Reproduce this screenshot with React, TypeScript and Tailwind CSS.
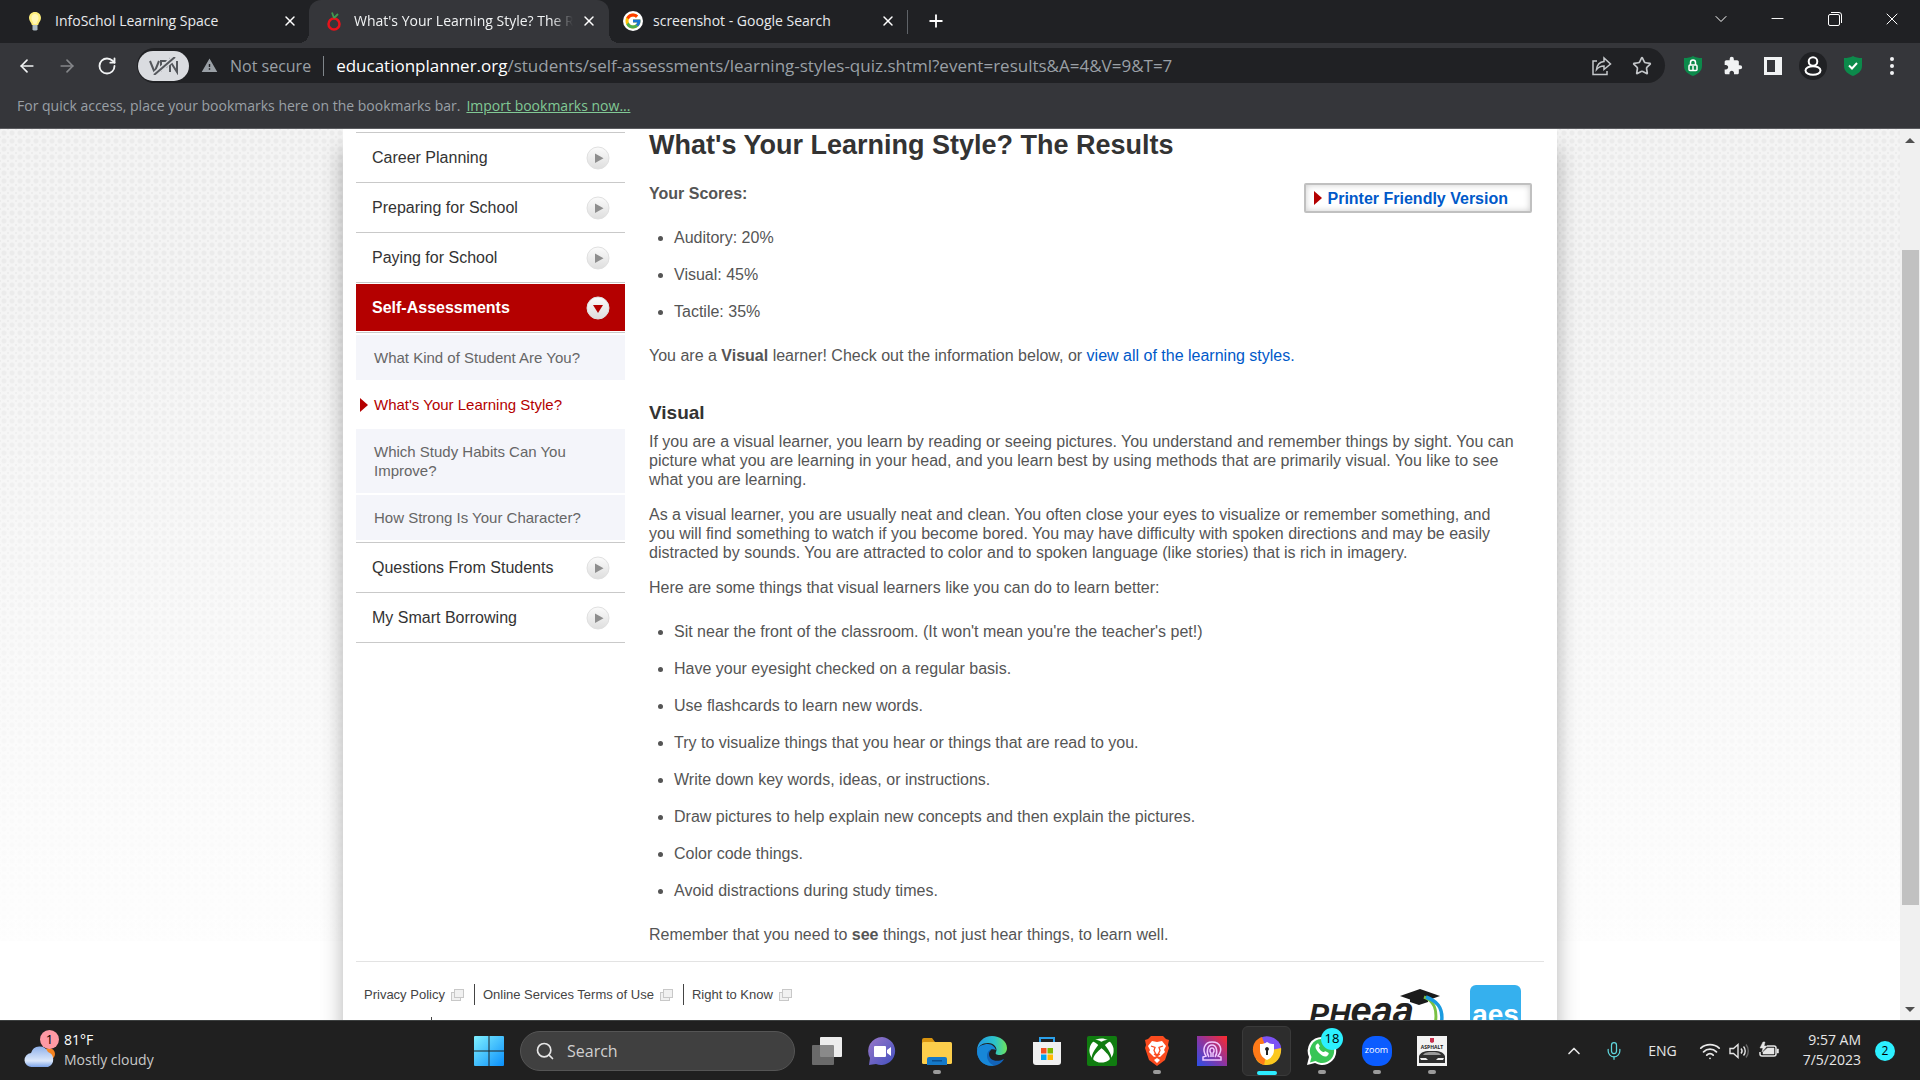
import React from "react";
import { ArrowLeft, ArrowRight, ChevronDown, ChevronUp, Mic, Minus, Plus, RotateCw, Search, Star, Wifi, X } from "lucide-react";
import { FaXbox } from "react-icons/fa";
import { FcGoogle } from "react-icons/fc";
import { MdExtension, MdWarning } from "react-icons/md";

const link = "text-[#0059c9] hover:underline";

/* ---------- Browser chrome ---------- */

function Bulb() {
  return (
    <svg viewBox="0 0 16 20" className="h-5 w-4">
      <path d="M8 1c-3.600 0-6 2.600-6 6 0 3 2.500 4.500 2.800 7h6.400c.3-2.500 2.800-4 2.800-7 0-3.400-2.400-6-6-6Z" fill="#fdee7c" />
      <path d="M8 3c-2 0-3.500 1.500-3.500 4 0 2 1.700 4 2 6h3c.3-2 2-4 2-6C11.500 4.500 10 3 8 3Z" fill="#fff7b8" />
      <path d="M5.500 14h5v4.500l-1 1h-3l-1-1Z" fill="#a9b9c2" />
    </svg>
  );
}

function Apple() {
  return (
    <svg viewBox="0 0 16 20" className="h-5 w-4" fill="none">
      <ellipse cx="8" cy="13" rx="5.500" ry="5.500" stroke="#e8131b" strokeWidth="2.500" />
      <path d="M8 7 6 1.500M8 7l4-4" stroke="#3f9b4f" strokeWidth="1.800" />
    </svg>
  );
}

function Tab({ icon, title, active = false }: { icon: React.ReactNode; title: string; active?: boolean }) {
  return (
    <div
      className={
        active
          ? "relative flex h-full w-[300px] items-center rounded-t-xl bg-[#35363a] pr-3 pb-0.5 pl-[15px]"
          : "flex h-full w-[298px] items-center pr-[11px] pb-0.5 pl-3.5"
      }
    >
      {active && (
        <>
          <span className="absolute bottom-0 -left-2.5 size-2.5 bg-[radial-gradient(circle_at_0_0,#202124_10px,#35363a_10px)]" />
          <span className="absolute -right-2.5 bottom-0 size-2.5 bg-[radial-gradient(circle_at_100%_0,#202124_10px,#35363a_10px)]" />
        </>
      )}
      <span className="flex w-5 justify-center">{icon}</span>
      <button
        className={
          active
            ? "ml-2.5 flex-1 overflow-hidden mask-r-from-90% text-left text-sm whitespace-nowrap text-[#f1f3f4]"
            : "ml-2.5 flex-1 overflow-hidden text-left text-sm whitespace-nowrap text-[#e8eaed]"
        }
      >
        {title}
      </button>
      <button aria-label="Close tab" className="ml-2 text-white">
        <X size={16} strokeWidth={2.2} />
      </button>
    </div>
  );
}

function TabStrip() {
  return (
    <div className="flex h-[43px] items-center bg-[#202124]">
      <div className="flex h-full pl-[11px]">
        <Tab icon={<Bulb />} title="InfoSchol Learning Space" />
        <Tab active icon={<Apple />} title="What's Your Learning Style? The Results" />
        <Tab
          icon={
            <span className="flex size-5 items-center justify-center rounded-full bg-white">
              <FcGoogle size={18} />
            </span>
          }
          title="screenshot - Google Search"
        />
      </div>
      <span className="h-6 w-px bg-[#5f6368]" />
      <button aria-label="New tab" className="ml-[18px] pb-0.5 text-white">
        <Plus size={20} strokeWidth={2.2} />
      </button>
      <div className="ml-auto flex h-full items-center pb-1.5 text-white">
        <button aria-label="Search tabs" className="flex w-[57px] justify-center">
          <ChevronDown size={20} strokeWidth={1.2} />
        </button>
        <button aria-label="Minimize" className="flex w-[57px] justify-center">
          <Minus size={19} strokeWidth={1.2} />
        </button>
        <button aria-label="Restore" className="flex w-[57px] justify-center">
          <svg viewBox="0 0 14 14" className="size-3.5" fill="none" stroke="currentColor">
            <rect x="0.500" y="2.500" width="11" height="11" rx="1.500" />
            <path d="M3 .5h8a2.500 2.500 0 0 1 2.500 2.500v8" />
          </svg>
        </button>
        <button aria-label="Close" className="flex w-[57px] justify-center">
          <X size={20} strokeWidth={1.2} />
        </button>
      </div>
    </div>
  );
}

function Shield({ children }: { children: React.ReactNode }) {
  return (
    <svg viewBox="0 0 18 20" className="h-5 w-[18px]" fill="none" stroke="#fff">
      <path d="M9 0c2.500 1.500 5.500 2 9 2v8c0 5-4 8-9 10-5-2-9-5-9-10V2c3.500 0 6.500-.5 9-2Z" fill="#0c8a4b" stroke="none" />
      {children}
    </svg>
  );
}

function Toolbar() {
  return (
    <div className="flex h-[45px] items-center bg-[#35363a] text-[#f1f3f4]">
      <button aria-label="Back" className="ml-[17px]">
        <ArrowLeft size={20} />
      </button>
      <button aria-label="Forward" className="ml-5 text-[#85878a]">
        <ArrowRight size={20} />
      </button>
      <button aria-label="Reload" className="ml-5">
        <RotateCw size={20} strokeWidth={2.2} />
      </button>
      <div className="ml-5 flex h-[35px] flex-1 items-center rounded-full bg-[#202124] px-px text-base text-[#9aa0a6]">
        <button aria-label="VPN" className="flex h-[30px] w-[51px] items-center justify-center rounded-full bg-[#dadce0]">
          <svg viewBox="0 0 32 18" className="h-[18px] w-8" fill="none" stroke="#54575c" strokeWidth="2">
            <path d="m2 4 4.500 11L11 4M13 15V4h4c3.500 0 3.500 6 0 6h-4M22 15V4l7 11V4" />
            <path d="M6 18 27 0" stroke="#dadce0" strokeWidth="5" />
            <path d="M6 18 27 0" />
          </svg>
        </button>
        <MdWarning size={17} className="ml-3" />
        <span className="ml-3">Not secure</span>
        <span className="mx-3 h-5 w-px bg-[#80868b]" />
        <div
          role="textbox"
          aria-label="Address"
          contentEditable
          suppressContentEditableWarning
          className="min-w-0 flex-1 overflow-hidden text-[17px] leading-6 whitespace-nowrap outline-none"
        >
          <span className="text-white">educationplanner.org</span>/students/self-assessments/learning-styles-quiz.shtml?event=results&amp;A=4&amp;V=9&amp;T=7
        </div>
        <button aria-label="Share" className="mr-5 text-[#c4c7ca]">
          <svg viewBox="0 0 20 20" className="size-5" fill="none" stroke="currentColor" strokeWidth="1.500">
            <path d="M5 5H1v13.500h14V15" />
            <path d="M12 2v3.500C7.500 6 5 9 4.500 13.500 6.500 11 9 10 12 10v3.500L18.500 8Z" />
          </svg>
        </button>
        <button aria-label="Bookmark this page" className="mr-3 text-[#c4c7ca]">
          <Star size={20} />
        </button>
      </div>
      <div className="flex items-center">
        <button aria-label="Secure browsing" className="ml-[18px] flex w-5 justify-center">
          <Shield>
            <rect x="5" y="9" width="8" height="5.500" rx="1" strokeWidth="1.500" />
            <path d="M6.500 9V6.500a2.500 2.500 0 0 1 5 0V9M9 10v4" strokeWidth="1.500" />
          </Shield>
        </button>
        <button aria-label="Extensions" className="ml-5">
          <MdExtension size={20} />
        </button>
        <button aria-label="Side panel" className="ml-5 flex w-5 justify-center">
          <span className="h-[18px] w-[18px] border-[3px] border-r-[7px] border-[#f1f3f4]" />
        </button>
        <button aria-label="Profile" className="ml-4 flex size-7 items-center justify-center rounded-full bg-[#202124]">
          <svg viewBox="0 0 18 20" className="h-5 w-[18px]" fill="none" stroke="#fff" strokeWidth="2">
            <circle cx="9" cy="5.500" r="4.300" />
            <ellipse cx="9" cy="14.500" rx="7.500" ry="4.300" />
          </svg>
        </button>
        <button aria-label="Protection" className="ml-4 flex w-5 justify-center">
          <Shield>
            <path d="m5 9.500 3 3L13 7" strokeWidth="2" />
          </Shield>
        </button>
        <button aria-label="Menu" className="mr-[26px] ml-[27px] flex flex-col gap-[3px]">
          <span className="size-1 rounded-full bg-current" />
          <span className="size-1 rounded-full bg-current" />
          <span className="size-1 rounded-full bg-current" />
        </button>
      </div>
    </div>
  );
}

function BookmarksBar() {
  return (
    <div className="flex h-[41px] items-center gap-1.5 border-b border-[#5b5c60] bg-[#35363a] pb-1 pl-[17px] text-sm text-[#9aa0a6]">
      <span>For quick access, place your bookmarks here on the bookmarks bar.</span>
      <a href="#import" className="text-[#81c995] underline">
        Import bookmarks now...
      </a>
    </div>
  );
}

/* ---------- Web page ---------- */

function RoundArrow({ open = false }: { open?: boolean }) {
  return (
    <svg viewBox="0 0 24 24" className="size-6">
      <defs>
        <linearGradient id="disc" x1="0" y1="0" x2="0" y2="1">
          <stop offset="0" stopColor="#fbfbfb" />
          <stop offset="1" stopColor="#dedede" />
        </linearGradient>
      </defs>
      <circle cx="12" cy="12" r="11" fill="url(#disc)" stroke="#e0e0e0" />
      {open ? <path d="M7 9h10l-5 8Z" fill="#b40000" /> : <path d="M9 7.500v9.500l8.500-4.750Z" fill="#8e8e8e" />}
    </svg>
  );
}

function NavRow({ label }: { label: string }) {
  return (
    <li className="border-b border-[#c9c9c9]">
      <a href="#section" className="flex h-[49px] items-center justify-between pr-[15px] pl-4 text-base text-[#333]">
        {label}
        <RoundArrow />
      </a>
    </li>
  );
}

function SubRow({ label, current = false }: { label: string; current?: boolean }) {
  return (
    <li
      className={
        current
          ? "relative py-[13px] pr-12 pl-[18px] text-[15px] leading-[19px] text-[#b40000]"
          : "bg-[#f4f5fa] py-[13px] pr-12 pl-[18px] text-[15px] leading-[19px] text-[#666]"
      }
    >
      {current && (
        <svg viewBox="0 0 8 14" className="absolute top-4 left-1 h-3.5 w-2">
          <path d="M0 0 8 7 0 14Z" fill="#b40000" />
        </svg>
      )}
      <a href="#quiz" className="-mr-8 block">
        {label}
      </a>
    </li>
  );
}

function Sidebar() {
  return (
    <nav aria-label="Sections" className="w-[269px] shrink-0 pt-[3px]">
      <ul className="border-t border-[#c9c9c9]">
        <NavRow label="Career Planning" />
        <NavRow label="Preparing for School" />
        <NavRow label="Paying for School" />
        <li>
          <div className="border-b border-[#c9c9c9] py-px">
            <a href="#assess" className="flex h-[47px] items-center justify-between bg-[#b40000] pr-[15px] pl-4 text-base font-bold text-white">
              Self-Assessments
              <RoundArrow open />
            </a>
          </div>
          <ul className="flex flex-col gap-0.5 border-b border-[#c9c9c9] py-0.5">
            <SubRow label="What Kind of Student Are You?" />
            <SubRow current label="What's Your Learning Style?" />
            <SubRow label="Which Study Habits Can You Improve?" />
            <SubRow label="How Strong Is Your Character?" />
          </ul>
        </li>
        <NavRow label="Questions From Students" />
        <NavRow label="My Smart Borrowing" />
      </ul>
    </nav>
  );
}

const tips = [
  "Sit near the front of the classroom. (It won't mean you're the teacher's pet!)",
  "Have your eyesight checked on a regular basis.",
  "Use flashcards to learn new words.",
  "Try to visualize things that you hear or things that are read to you.",
  "Write down key words, ideas, or instructions.",
  "Draw pictures to help explain new concepts and then explain the pictures.",
  "Color code things.",
  "Avoid distractions during study times.",
];

function Bullets({ items }: { items: string[] }) {
  return (
    <ul className="my-[25px] flex list-disc flex-col gap-[18px] pl-[25px]">
      {items.map((t) => (
        <li key={t}>{t}</li>
      ))}
    </ul>
  );
}

function Article() {
  return (
    <article className="min-w-0 flex-1 text-base leading-[19px] text-[#555]">
      <h1 className="text-[27px] leading-8 font-bold text-[#333]">What's Your Learning Style? The Results</h1>
      <a
        href="#print"
        className="float-right mt-[22px] flex h-[30px] items-center gap-1.5 rounded-xs border-2 border-[#c0c0c0] pr-[22px] pl-2 font-bold text-[#0059c9] shadow-[inset_0_0_6px_#ccc]"
      >
        <svg viewBox="0 0 8 14" className="h-3.5 w-2">
          <path d="M0 0 8 7 0 14Z" fill="#b40000" />
        </svg>
        Printer Friendly Version
      </a>
      <p className="mt-[23px] font-bold">Your Scores:</p>
      <Bullets items={["Auditory: 20%", "Visual: 45%", "Tactile: 35%"]} />
      <p>
        You are a <b>Visual</b> learner! Check out the information below, or{" "}
        <a href="#all" className={link}>
          view all of the learning styles.
        </a>
      </p>
      <h2 className="mt-[37px] mb-2 text-[19px] leading-[22px] font-bold text-[#333]">Visual</h2>
      <p className="pr-3">
        If you are a visual learner, you learn by reading or seeing pictures. You understand and remember things by sight. You can picture
        what you are learning in your head, and you learn best by using methods that are primarily visual. You like to see what you are
        learning.
      </p>
      <p className="mt-4 pr-3">
        As a visual learner, you are usually neat and clean. You often close your eyes to visualize or remember something, and you will
        find something to watch if you become bored. You may have difficulty with spoken directions and may be easily distracted by
        sounds. You are attracted to color and to spoken language (like stories) that is rich in imagery.
      </p>
      <p className="mt-4">Here are some things that visual learners like you can do to learn better:</p>
      <Bullets items={tips} />
      <p>
        Remember that you need to <b>see</b> things, not just hear things, to learn well.
      </p>
    </article>
  );
}

function FooterLink({ label, divided = true }: { label: string; divided?: boolean }) {
  return (
    <li className={divided ? "flex h-[21px] items-center border-r border-[#444] pr-2.5" : "flex h-[21px] items-center"}>
      <a href="#legal" className="flex items-center gap-1.5">
        {label}
        <svg viewBox="0 0 13 12" className="h-3 w-[13px]" stroke="#c8c8c8" fill="#f1f1f1">
          <rect x="0.500" y="3.500" width="9" height="8" />
          <rect x="3.500" y="0.500" width="9" height="8" />
        </svg>
      </a>
    </li>
  );
}

function Footer() {
  return (
    <footer className="mt-[17px] flex justify-between border-t border-[#e3e3e3] text-[13px] text-[#444]">
      <div className="pt-[22px] pl-2">
        <ul className="flex gap-2">
          <FooterLink label="Privacy Policy" />
          <FooterLink label="Online Services Terms of Use" />
          <FooterLink divided={false} label="Right to Know" />
        </ul>
        <div className="mt-3 h-5 w-[68px] border-r border-[#444]" />
      </div>
      <div className="flex gap-14 pr-[23px]">
        <div className="relative flex items-baseline pt-7 leading-[42px] font-bold text-[#222] italic">
          <span className="text-[30px]">PH</span>
          <span className="text-[38px]">eaa</span>
          <svg viewBox="0 0 46 40" className="absolute top-[27px] left-[91px] h-10 w-[46px]">
            <path d="M0 7 20 0l20 7-20 7Z" fill="#1b1b1b" />
            <path d="M10 10v3l9 3 9-3v-3" fill="#1b1b1b" />
            <path d="M24 8c10 4 14 12 11 28" fill="none" stroke="#7ac143" strokeWidth="3" />
            <path d="M26 8c14 5 18 14 15 28" fill="none" stroke="#1a9be0" strokeWidth="3.500" />
          </svg>
        </div>
        <div className="mt-[23px] h-[52px] w-[51px] rounded-md bg-[#35b0ee] pt-2 text-center text-[28px] leading-[44px] font-bold text-white">
          aes
        </div>
      </div>
    </footer>
  );
}

function WebPage() {
  return (
    <main className="flex min-h-0 flex-1 overflow-hidden bg-white font-['Liberation_Sans',Arial,sans-serif]">
      <div className="relative min-w-0 flex-1">
        <div className="absolute inset-x-0 top-0 h-[812px] bg-[#f4f4f4] bg-[radial-gradient(circle,#ebebeb_2px,transparent_3px),radial-gradient(circle,#ececec_1px,transparent_1px)] bg-[size:8px_8px] bg-[position:0_0,4px_4px]" />
        <div className="absolute inset-x-0 top-0 h-[812px] bg-linear-to-b from-white/0 from-20% to-white/90" />
        <div className="relative mx-auto h-[1000px] w-[1214px] bg-white px-[13px] shadow-[0_20px_20px_rgba(0,0,0,0.3)]">
          <div className="flex gap-6 pr-3">
            <Sidebar />
            <Article />
          </div>
          <Footer />
        </div>
      </div>
      <div aria-hidden="true" className="flex w-5 shrink-0 flex-col items-center justify-between bg-[#f0f0f0] pt-[9px] pb-2">
        <span className="border-x-[5px] border-b-[5px] border-x-transparent border-b-[#505050]" />
        <span className="mt-[107px] mb-auto h-[655px] w-[17px] bg-[#c1c1c1]" />
        <span className="border-x-[5px] border-t-[5px] border-x-transparent border-t-[#505050]" />
      </div>
    </main>
  );
}

/* ---------- Taskbar ---------- */

function TaskIcon({ label, running = false, active = false, children }: { label: string; running?: boolean; active?: boolean; children: React.ReactNode }) {
  return (
    <button
      aria-label={label}
      className={
        active
          ? "relative mx-[3px] flex h-[50px] w-[49px] items-center justify-center rounded-md border border-[#3a3a3a] bg-[#2d2d2d]"
          : "relative flex h-[50px] w-[55px] items-center justify-center"
      }
    >
      {children}
      {running && <span className="absolute bottom-0.5 h-1 w-2 rounded-full bg-[#9a9a9a]" />}
      {active && <span className="absolute bottom-0 h-1 w-5 rounded-full bg-[#2cecff]" />}
    </button>
  );
}

function Taskbar() {
  return (
    <footer className="grid h-[60px] shrink-0 grid-cols-[1fr_auto_1fr] items-center border-t border-[#3c3f3f] bg-[#202020] text-[#e6e6e6]">
      <button className="flex items-center gap-2 pb-0.5 pl-6 text-left text-sm leading-5">
        <span className="relative block h-9 w-8">
          <svg viewBox="0 0 32 36" className="h-9 w-8">
            <defs>
              <linearGradient id="cloud" x1="0" y1="0" x2="0" y2="1">
                <stop offset="0" stopColor="#8fb1ea" />
                <stop offset="0.700" stopColor="#dce8fb" />
                <stop offset="1" stopColor="#7ba3e8" />
              </linearGradient>
            </defs>
            <circle cx="25" cy="22" r="6" fill="#f58320" />
            <path d="M8 35a7 7 0 0 1-1-14 9 9 0 0 1 17-1 8 8 0 0 1 0 15Z" fill="url(#cloud)" />
          </svg>
          <span className="absolute -top-0.5 left-4 flex size-[19px] items-center justify-center rounded-full bg-[#ff99a4] text-[13px] text-black">1</span>
        </span>
        <span>
          <span className="block text-white">81°F</span>
          <span className="block text-[#c8c8c8]">Mostly cloudy</span>
        </span>
      </button>

      <div className="flex items-center">
        <TaskIcon label="Start">
          <svg viewBox="0 0 30 30" className="size-[30px]">
            <defs>
              <linearGradient id="win" x1="0" y1="0" x2="1" y2="1">
                <stop offset="0" stopColor="#7ff0ff" />
                <stop offset="1" stopColor="#0a8ffb" />
              </linearGradient>
            </defs>
            <path d="M1 0h13.500v14.500H0V1a1 1 0 0 1 1-1ZM15.500 0H29a1 1 0 0 1 1 1v13.500H15.500ZM0 15.500h14.500V30H1a1 1 0 0 1-1-1ZM15.500 15.500H30V29a1 1 0 0 1-1 1H15.500Z" fill="url(#win)" />
          </svg>
        </TaskIcon>
        <label className="mx-1 flex h-10 w-[275px] items-center gap-3 rounded-full border border-[#555] bg-[#404040] px-3.5">
          <Search size={20} className="shrink-0 text-[#e6e6e6]" />
          <input aria-label="Search" placeholder="Search" className="w-full bg-transparent text-base outline-none placeholder:text-[#d0d0d0]" />
        </label>
        <TaskIcon label="Task view">
          <svg viewBox="0 0 30 30" className="size-[30px]">
            <rect x="8" y="1" width="22" height="20" rx="1" fill="#ededed" />
            <rect x="0" y="9" width="22" height="20" rx="1" fill="#787878" fillOpacity="0.850" />
          </svg>
        </TaskIcon>
        <TaskIcon label="Chat">
          <svg viewBox="0 0 30 30" className="size-[30px]">
            <defs>
              <linearGradient id="chat" x1="0" y1="0" x2="1" y2="1">
                <stop offset="0" stopColor="#9a78c8" />
                <stop offset="1" stopColor="#4250c0" />
              </linearGradient>
            </defs>
            <path d="M15 1a14 14 0 1 1-6 27l-7 1 1-7A14 14 0 0 1 15 1Z" fill="url(#chat)" />
            <path d="M8 10h10a1 1 0 0 1 1 1v9a1 1 0 0 1-1 1H8a1 1 0 0 1-1-1v-9a1 1 0 0 1 1-1ZM20 14l4-3v9l-4-3Z" fill="#fff" />
          </svg>
        </TaskIcon>
        <TaskIcon label="File Explorer" running>
          <svg viewBox="0 0 30 30" className="size-[30px]">
            <path d="M0 4a2 2 0 0 1 2-2h8l3 4h15v8H0Z" fill="#d9940f" />
            <rect x="0" y="6" width="30" height="22" rx="1.500" fill="#fcce4b" />
            <path d="M5 29v-6a2 2 0 0 1 2-2h16a2 2 0 0 1 2 2v6Z" fill="#1479c9" />
            <rect x="10" y="24" width="10" height="1.500" fill="#0b4f8e" />
          </svg>
        </TaskIcon>
        <TaskIcon label="Edge">
          <svg viewBox="0 0 30 30" className="size-[30px]">
            <defs>
              <linearGradient id="edgeTop" x1="0" y1="0.500" x2="1" y2="0.500">
                <stop offset="0.100" stopColor="#249fe0" />
                <stop offset="0.600" stopColor="#2cc4c9" />
                <stop offset="1" stopColor="#6ee25a" />
              </linearGradient>
            </defs>
            <path d="M0 15a15 15 0 0 0 20 14c3-1 6-4 7-6-8 4-15 1-15-5 0-2 1-3 2-4C11 8 0 8 0 15Z" fill="#1263b8" />
            <path d="M0 15C0 6 7 0 15 0s15 5 15 12c0 5-4 7-7 7-4 0-5-1-4-3 2-4-2-9-8-9C5 7 1 10 0 15Z" fill="url(#edgeTop)" />
            <path d="M0 15c1-5 6-7 11-7 4 0 7 3 8 6-5-2-9 1-9 6 0 4 3 8 7 9.500C7 31 0 24 0 15Z" fill="#1787d8" />
          </svg>
        </TaskIcon>
        <TaskIcon label="Microsoft Store">
          <svg viewBox="0 0 30 30" className="size-[30px]">
            <path d="M8 7V2h14v5" fill="none" stroke="#2ba0ea" strokeWidth="2" />
            <path d="M1 6h28v20a3 3 0 0 1-3 3H4a3 3 0 0 1-3-3Z" fill="#f0f0f0" />
            <path d="M9 12h5.500v5.500H9Z" fill="#f25022" />
            <path d="M15.500 12H21v5.500h-5.500Z" fill="#7fba00" />
            <path d="M9 18.500h5.500V24H9Z" fill="#00a4ef" />
            <path d="M15.500 18.500H21V24h-5.500Z" fill="#ffb900" />
          </svg>
        </TaskIcon>
        <TaskIcon label="Xbox">
          <span className="flex size-[30px] items-center justify-center rounded-xs bg-[#107c10]">
            <FaXbox size={25} color="#fff" />
          </span>
        </TaskIcon>
        <TaskIcon label="Brave" running>
          <svg viewBox="0 0 26 30" className="h-[30px] w-[26px]">
            <path d="M7 0h12l3 3 3 1-1 5 1 3-4 12-8 6-8-6L1 12l1-3-1-5 3-1Z" fill="#fb4b1e" />
            <path d="m8 5 5 1 5-1 4 5-2 4 1 2-4 4-1 1-3-1-3 1-1-1-4-4 1-2-2-4ZM13 22l3 2-3 3-3-3Z" fill="#fff" />
            <path d="m7 10 4 1.500-1 3 2 4h2l2-4-1-3 4-1.500M10 18l3 2 3-2" fill="none" stroke="#fb4b1e" strokeWidth="1.300" />
          </svg>
        </TaskIcon>
        <TaskIcon label="Profile app">
          <svg viewBox="0 0 30 30" className="size-[30px]">
            <defs>
              <linearGradient id="prof" x1="0" y1="1" x2="1" y2="0">
                <stop offset="0" stopColor="#2a50e8" />
                <stop offset="0.500" stopColor="#8e34a0" />
                <stop offset="1" stopColor="#ff2a2a" />
              </linearGradient>
            </defs>
            <path d="M0 0h30v30H0Z" fill="url(#prof)" />
            <g fill="none" stroke="#f0c8ff" strokeWidth="1.500">
              <path d="M6 24v-3l3-1c-4-6-2-14 6-14 9 0 11 8 6 14l3 1v3H6Z" />
              <path d="M12 21c-3-4-2-12 3-12s6 8 3 12" />
              <path d="M14 21v-4c-2-2-1-5 1-5s3 3 1 5v4" />
            </g>
          </svg>
        </TaskIcon>
        <TaskIcon label="Secure Browser" active>
          <svg viewBox="0 0 30 30" className="size-[30px]">
            <path d="M8 2a15 15 0 0 1 20 6c2 4 1 8 0 10L15 15Z" fill="#7c52f4" />
            <path d="M29 12c1 9-5 17-14 17-5 0-9-2-11-6l11-8Z" fill="#fbc81f" />
            <path d="M10 1C1 4-2 14 4 23c2 3 5 5 8 6l3-14Z" fill="#ff7a18" />
            <path d="M15 6c3 2 5 2 7 2v6c0 5-3 8-7 10-4-2-7-5-7-10V8c3 0 5-.5 7-2Z" fill="#fff" />
            <path d="M15 11a2 2 0 0 1 1 3.700V19h-2v-4.300a2 2 0 0 1 1-3.700Z" fill="#222" />
          </svg>
        </TaskIcon>
        <TaskIcon label="WhatsApp" running>
          <svg viewBox="0 0 30 30" className="size-[30px]">
            <path d="M15 1a14 14 0 1 1-7 26l-8 2 2-8A14 14 0 0 1 15 1Z" fill="#fff" />
            <path d="M15 3a12 12 0 1 1-6.500 22L3 26.500 4.500 21A12 12 0 0 1 15 3Z" fill="#38c556" />
            <path d="M10 8c-3 2-1 6 2 9s7 5 9 2c1-1 1-2 0-2.500l-2.500-1.300c-1-.3-1.500 1.300-2.500.8-2-1-3-2-4-4-.3-.7 1-1.200.8-2L11.500 8c-.3-.6-1-.5-1.500 0Z" fill="#fff" />
          </svg>
          <span className="absolute top-0.5 left-[27px] flex size-[22px] items-center justify-center rounded-full bg-[#2cf0ff] text-[13px] text-black">18</span>
        </TaskIcon>
        <TaskIcon label="Zoom" running>
          <span className="flex size-[30px] items-center justify-center rounded-[13px] bg-[#0b5cff] pb-0.5 text-[9px] text-white">zoom</span>
        </TaskIcon>
        <TaskIcon label="Asphalt" running>
          <svg viewBox="0 0 30 30" className="size-[30px]">
            <path d="M0 0h30v30H0Z" fill="#f3f3f3" />
            <path d="M13 2h4v4l-2 1-2-1Z" fill="#c8304d" />
            <text x="15" y="13" textAnchor="middle" fontSize="5" fontWeight="bold" fill="#222">
              ASPHALT
            </text>
            <path d="M2 20c3-5 6-5 13-5s10 0 13 5v7H2Z" fill="#303030" />
            <path d="M6 19c2-3 5-3 9-3s7 0 9 3Z" fill="#9a9a9a" />
            <path d="M3 22h6l2 2H4ZM27 22h-6l-2 2h7Z" fill="#eee" />
          </svg>
        </TaskIcon>
      </div>

      <div className="flex items-center justify-end pr-[25px] text-sm leading-5">
        <button aria-label="Show hidden icons">
          <ChevronUp size={20} />
        </button>
        <button aria-label="Microphone" className="ml-5 text-[#5fd5dc]">
          <Mic size={20} strokeWidth={1.5} />
        </button>
        <button className="ml-6">ENG</button>
        <button aria-label="Network, volume and battery" className="ml-[22px] flex items-center gap-2">
          <Wifi size={22} />
          <svg viewBox="0 0 20 20" className="size-5" fill="none" stroke="currentColor" strokeWidth="1.400">
            <path d="M1 7.500h3.500L9 3.500v13l-4.500-4H1Z" />
            <path d="M12 7.500c1.300 1.500 1.300 3.500 0 5M14.500 5.500c2.300 2.500 2.300 6.500 0 9" />
            <path d="M17 3.500c3 3.500 3 9.500 0 13" stroke="#666" />
          </svg>
          <svg viewBox="0 0 20 20" className="ml-0.5 size-5" fill="none" stroke="currentColor" strokeWidth="1.500">
            <path d="M8 5h7a2 2 0 0 1 2 2v6a2 2 0 0 1-2 2H3a2 2 0 0 1-2-2v-2" />
            <path d="M8.500 7H15v6H4v-2ZM18 8v4h1.500V8Z" fill="currentColor" strokeWidth="0.500" />
            <path d="M4 1 1 7h3l-1 4 5-6H5l1-4Z" fill="currentColor" strokeWidth="0.500" />
          </svg>
        </button>
        <button className="ml-6 pb-0.5 text-right">
          <span className="block">9:57 AM</span>
          <span className="block">7/5/2023</span>
        </button>
        <button aria-label="Notifications" className="ml-3.5 flex size-5 items-center justify-center rounded-full bg-[#2cf0ff] text-xs text-black">
          2
        </button>
      </div>
    </footer>
  );
}

export default function App() {
  return (
    <div className="flex h-screen flex-col overflow-hidden font-['Open_Sans','Noto_Sans',sans-serif]">
      <header>
        <TabStrip />
        <Toolbar />
        <BookmarksBar />
      </header>
      <WebPage />
      <Taskbar />
    </div>
  );
}
